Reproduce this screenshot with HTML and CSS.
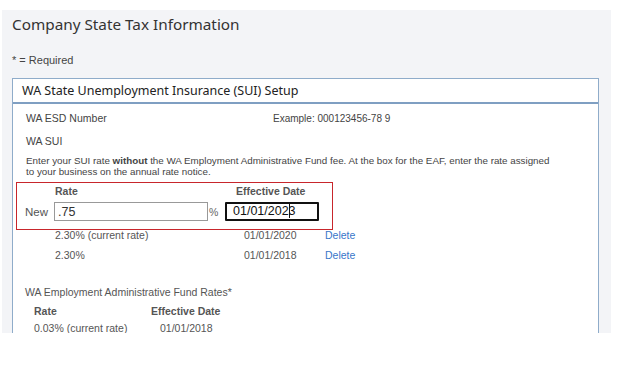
FILE: index.html
```html
<!DOCTYPE html>
<html lang="en">
<head>
  <meta charset="UTF-8" />
  <title>Company State Tax Information</title>
  <link rel="stylesheet" href="styles.css">
</head>
<body>
  <div class="panel">
    <div class="page-title">Company State Tax Information</div>
    <div class="required">* = Required</div>

    <div class="card">
      <div class="card-header">WA State Unemployment Insurance (SUI) Setup</div>
      <div class="card-body">
        <div class="field-row">
          <span class="field-label">WA ESD Number</span>
          <span class="field-hint">Example: 000123456-78 9</span>
        </div>
        <div class="field-row sui-label">WA SUI</div>
        <p class="note">Enter your SUI rate <b>without</b> the WA Employment Administrative Fund fee. At the box for the EAF, enter the rate assigned to your business on the annual rate notice.</p>

        <div class="new-rate">
          <span></span>
          <span class="col-head">Rate</span>
          <span></span>
          <span class="col-head date-head">Effective Date</span>
          <label class="new-label" for="rateInput">New</label>
          <input class="rate-input" id="rateInput" type="text" value=".75">
          <span class="pct">%</span>
          <div class="date-input" id="dateInput">01/01/202<span class="caret"></span>3</div>
        </div>

        <div class="history">
          <span>2.30% (current rate)</span>
          <span>01/01/2020</span>
          <a href="#" class="delete">Delete</a>
          <span>2.30%</span>
          <span>01/01/2018</span>
          <a href="#" class="delete">Delete</a>
        </div>

        <div class="eaf">
          <div class="eaf-title">WA Employment Administrative Fund Rates*</div>
          <div class="eaf-table">
            <span class="col-head">Rate</span>
            <span class="col-head">Effective Date</span>
            <span>0.03% (current rate)</span>
            <span class="eaf-date">01/01/2018</span>
          </div>
        </div>
      </div>
    </div>
  </div>
</body>
</html>
```

FILE: styles.css
```css
body {
  margin: 0;
  background: #fff;
  font-family: "Liberation Sans", Arial, sans-serif;
  color: #444;
}
.panel {
  margin: 10px 0 0 2px;
  width: 609px;
  height: 323px;
  background: #f3f4f7;
  overflow: hidden;
  box-sizing: border-box;
  padding: 0 12px 0 10px;
}
.page-title {
  font-family: "Noto Sans", "Open Sans", sans-serif;
  font-size: 15.3px;
  line-height: 20px;
  padding-top: 4px;
  color: #333;
}
.required {
  font-size: 11px;
  line-height: 14px;
  margin-top: 19px;
  color: #444;
}
.card {
  margin-top: 11px;
  background: #fff;
  border: 1px solid #8facca;
  border-bottom: none;
  height: 400px;
}
.card-header {
  font-family: "Noto Sans", "Open Sans", sans-serif;
  font-size: 12.5px;
  line-height: 22px;
  color: #222;
  padding: 1px 9px 0;
  border-bottom: 2px solid #7f9fc2;
}
.card-body {
  padding: 7px 3px 0;
  font-size: 10.5px;
  color: #444;
}
.field-row {
  padding-left: 10px;
  line-height: 14px;
  display: flex;
}
.field-label {
  width: 247px;
}
.field-hint {
  font-size: 10px;
  padding-top: 1px;
}
.sui-label {
  margin-top: 8px;
}
.note {
  margin: 7px 0 0;
  padding-left: 10px;
  width: 530px;
  font-size: 9.8px;
  line-height: 11px;
}
.new-rate {
  margin-top: 5px;
  width: 317px;
  height: 48px;
  box-sizing: border-box;
  border: 1px solid #c8262c;
  display: grid;
  grid-template-columns: 37px 154px 17px 94px;
  grid-template-rows: 15px 19px;
  row-gap: 4px;
  align-items: center;
}
.col-head {
  font-size: 10.5px;
  color: #555;
  font-weight: bold;
}
.new-rate .col-head {
  padding-left: 1px;
}
.date-head {
  padding-left: 11px !important;
  white-space: nowrap;
}
.new-label {
  font-size: 11.5px;
  color: #555;
  padding-left: 8px;
}
.rate-input {
  width: 154px;
  height: 19px;
  box-sizing: border-box;
  border: 1px solid #999;
  font-family: "Liberation Sans", Arial, sans-serif;
  font-size: 12.5px;
  color: #333;
  padding: 0 3px;
  outline: none;
}
.pct {
  font-size: 10.5px;
  color: #666;
  padding-left: 1px;
}
.date-input {
  width: 94px;
  height: 19px;
  box-sizing: border-box;
  border: 2px solid #111;
  border-radius: 1px;
  font-size: 12.5px;
  line-height: 15px;
  color: #111;
  padding-left: 6px;
}
.caret {
  display: inline-block;
  width: 1px;
  height: 14px;
  background: #111;
  vertical-align: -3px;
  margin-right: -1px;
}
.history {
  display: grid;
  grid-template-columns: 189px 81px auto;
  grid-auto-rows: 20px;
  margin-top: -2px;
  padding-left: 39px;
  font-size: 10.5px;
  line-height: 14px;
  color: #555;
}
.delete {
  color: #3876c9;
  text-decoration: none;
}
.eaf {
  margin-top: 17px;
  padding-left: 9px;
  font-size: 10.5px;
  color: #555;
}
.eaf-title {
  line-height: 14px;
}
.eaf-table {
  margin-top: 3px;
  padding-left: 9px;
  display: grid;
  grid-template-columns: 117px auto;
  grid-auto-rows: 17px;
  align-items: center;
}
.eaf-date {
  padding-left: 9px;
}
```
